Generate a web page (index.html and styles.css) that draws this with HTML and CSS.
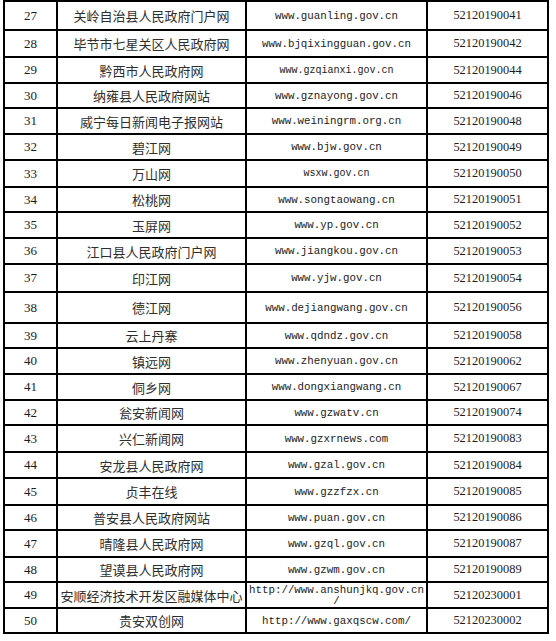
FILE: index.html
```html
<!DOCTYPE html>
<html lang="zh-CN">
<head>
<meta charset="utf-8">
<title>网站备案列表</title>
<link rel="stylesheet" href="styles.css">
</head>
<body>
<div class="sheet">
  <div class="c num">27</div><div class="c name">关岭自治县人民政府门户网</div><div class="c url">www.guanling.gov.cn</div><div class="c code">52120190041</div>
  <div class="c num">28</div><div class="c name">毕节市七星关区人民政府网</div><div class="c url">www.bjqixingguan.gov.cn</div><div class="c code">52120190042</div>
  <div class="c num">29</div><div class="c name">黔西市人民政府网</div><div class="c url sm">www.gzqianxi.gov.cn</div><div class="c code">52120190044</div>
  <div class="c num">30</div><div class="c name">纳雍县人民政府网站</div><div class="c url">www.gznayong.gov.cn</div><div class="c code">52120190046</div>
  <div class="c num">31</div><div class="c name">威宁每日新闻电子报网站</div><div class="c url">www.weiningrm.org.cn</div><div class="c code">52120190048</div>
  <div class="c num">32</div><div class="c name">碧江网</div><div class="c url">www.bjw.gov.cn</div><div class="c code">52120190049</div>
  <div class="c num">33</div><div class="c name">万山网</div><div class="c url sm">wsxw.gov.cn</div><div class="c code">52120190050</div>
  <div class="c num">34</div><div class="c name">松桃网</div><div class="c url">www.songtaowang.cn</div><div class="c code">52120190051</div>
  <div class="c num">35</div><div class="c name">玉屏网</div><div class="c url">www.yp.gov.cn</div><div class="c code">52120190052</div>
  <div class="c num">36</div><div class="c name">江口县人民政府门户网</div><div class="c url">www.jiangkou.gov.cn</div><div class="c code">52120190053</div>
  <div class="c num">37</div><div class="c name">印江网</div><div class="c url">www.yjw.gov.cn</div><div class="c code">52120190054</div>
  <div class="c num">38</div><div class="c name">德江网</div><div class="c url">www.dejiangwang.gov.cn</div><div class="c code">52120190056</div>
  <div class="c num">39</div><div class="c name">云上丹寨</div><div class="c url">www.qdndz.gov.cn</div><div class="c code">52120190058</div>
  <div class="c num">40</div><div class="c name">镇远网</div><div class="c url">www.zhenyuan.gov.cn</div><div class="c code">52120190062</div>
  <div class="c num">41</div><div class="c name">侗乡网</div><div class="c url">www.dongxiangwang.cn</div><div class="c code">52120190067</div>
  <div class="c num">42</div><div class="c name">瓮安新闻网</div><div class="c url">www.gzwatv.cn</div><div class="c code">52120190074</div>
  <div class="c num">43</div><div class="c name">兴仁新闻网</div><div class="c url">www.gzxrnews.com</div><div class="c code">52120190083</div>
  <div class="c num">44</div><div class="c name">安龙县人民政府网</div><div class="c url">www.gzal.gov.cn</div><div class="c code">52120190084</div>
  <div class="c num">45</div><div class="c name">贞丰在线</div><div class="c url">www.gzzfzx.cn</div><div class="c code">52120190085</div>
  <div class="c num">46</div><div class="c name">普安县人民政府网站</div><div class="c url">www.puan.gov.cn</div><div class="c code">52120190086</div>
  <div class="c num">47</div><div class="c name">晴隆县人民政府网</div><div class="c url">www.gzql.gov.cn</div><div class="c code">52120190087</div>
  <div class="c num">48</div><div class="c name">望谟县人民政府网</div><div class="c url">www.gzwm.gov.cn</div><div class="c code">52120190089</div>
  <div class="c num">49</div><div class="c name">安顺经济技术开发区融媒体中心</div><div class="c url wrap">http://www.anshunjkq.gov.cn<br>/</div><div class="c code">52120230001</div>
  <div class="c num">50</div><div class="c name">贵安双创网</div><div class="c url">http://www.gaxqscw.com/</div><div class="c code">52120230002</div>
</div>
</body>
</html>
```

FILE: styles.css
```css
html, body {
  margin: 0;
  padding: 0;
  background: #ffffff;
}

.sheet {
  display: grid;
  grid-template-columns: 53px 189px 181px 121px;
  grid-template-rows: 29px 27px 26px 25px 26px 26px 27px 25px 26px 26px 28px 31px 25px 26px 26px 25px 27px 26px 27px 25px 27px 25px 26px 25px;
  width: 544px;
  margin-left: 3px;
  border-top: 2px solid #000;
  border-left: 2px solid #000;
  color: #1c1c1c;
}

.c {
  box-sizing: border-box;
  border-right: 2px solid #000;
  border-bottom: 2px solid #000;
  display: flex;
  align-items: center;
  justify-content: center;
  overflow: hidden;
  white-space: nowrap;
}

.num {
  font-family: "Liberation Serif", "Times New Roman", serif;
  font-size: 13px;
}

.name {
  font-family: "Noto Sans CJK SC", sans-serif;
  font-size: 13px;
  color: #2e2e2e;
}

.url {
  font-family: "Liberation Mono", "DejaVu Sans Mono", monospace;
  font-size: 10.8px;
}

.url.sm {
  font-size: 10px;
}

.url.wrap {
  display: block;
  text-align: center;
  line-height: 11px;
  padding-top: 2px;
}

.code {
  font-family: "Liberation Serif", "Times New Roman", serif;
  font-size: 12.4px;
}
```
